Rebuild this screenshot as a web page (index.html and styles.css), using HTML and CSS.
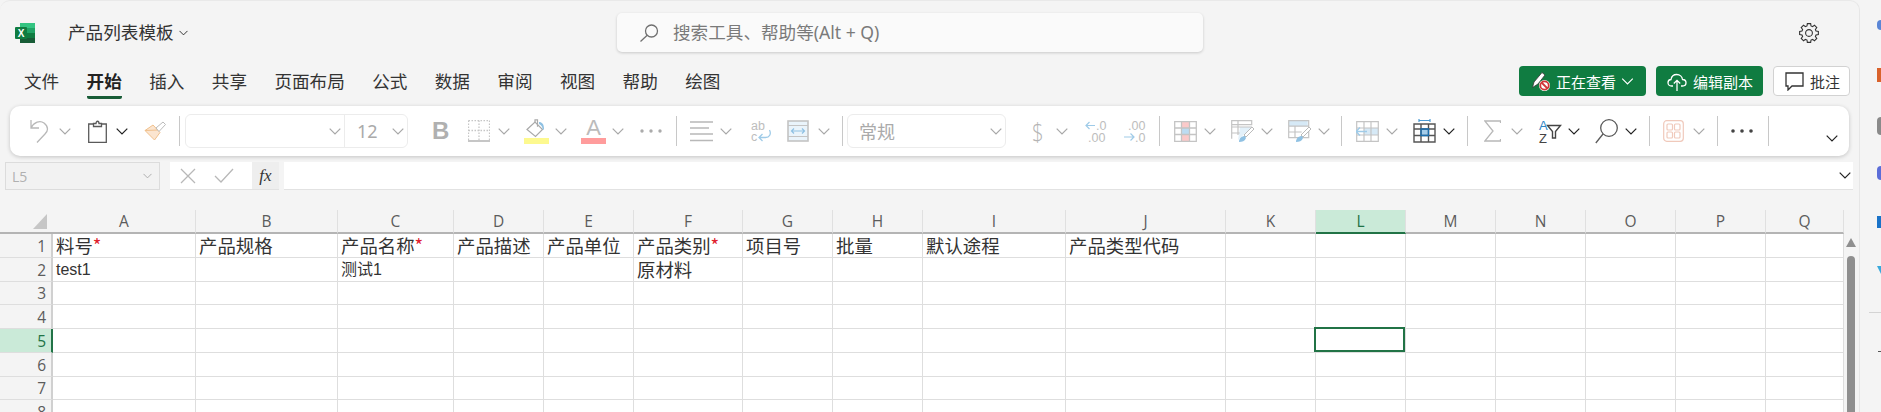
FILE: index.html
```html
<!DOCTYPE html>
<html lang="zh-CN">
<head>
  <meta charset="UTF-8">
  <title>产品列表模板 - Excel</title>
  <link rel="stylesheet" href="styles.css">
</head>
<body>
  <svg class="defs">
    <symbol id="chev" viewBox="0 0 12 7"><path d="M.7.7 6 6 11.3.7"/></symbol>
  </svg>

  <div class="app">
    <header class="titlebar">
      <div class="doc">
        <svg class="logo" width="20" height="20" viewBox="0 0 20 20">
          <rect x="5" width="15" height="20" rx="1.5" fill="#21a366"/>
          <rect x="5" width="15" height="5" fill="#33c481"/>
          <rect x="5" y="10" width="15" height="5" fill="#107c41"/>
          <rect x="5" y="15" width="15" height="5" fill="#185c37"/>
          <rect y="4" width="12" height="12" rx="1" fill="#107c41"/>
          <text x="6" y="13.6" class="logo-x">X</text>
        </svg>
        <span class="doc-name">产品列表模板</span>
        <svg class="chev dark small"><use href="#chev"/></svg>
      </div>
      <div class="search">
        <svg width="20" height="18" viewBox="0 0 20 18" class="line">
          <circle cx="12.5" cy="7" r="6"/><path d="M8.2 11.3 1.5 17.5"/>
        </svg>
        <span>搜索工具、帮助等(Alt + Q)</span>
      </div>
      <svg class="gear line dark" width="20" height="20" viewBox="-10 -10 20 20">
        <polygon points="7.02,-2.01 9.36,-1.65 9.36,1.65 7.02,2.01 6.38,3.54 7.78,5.45 5.45,7.78 3.54,6.38 2.01,7.02 1.65,9.36 -1.65,9.36 -2.01,7.02 -3.54,6.38 -5.45,7.78 -7.78,5.45 -6.38,3.54 -7.02,2.01 -9.36,1.65 -9.36,-1.65 -7.02,-2.01 -6.38,-3.54 -7.78,-5.45 -5.45,-7.78 -3.54,-6.38 -2.01,-7.02 -1.65,-9.36 1.65,-9.36 2.01,-7.02 3.54,-6.38 5.45,-7.78 7.78,-5.45 6.38,-3.54"/>
        <circle r="3.4"/>
      </svg>
    </header>

    <div class="menu">
      <nav class="tabs">
        <a>文件</a>
        <a class="active">开始</a>
        <a>插入</a>
        <a>共享</a>
        <a>页面布局</a>
        <a>公式</a>
        <a>数据</a>
        <a>审阅</a>
        <a>视图</a>
        <a>帮助</a>
        <a>绘图</a>
      </nav>
      <div class="actions">
        <button class="btn green viewing">
          <svg width="20" height="22" viewBox="0 0 20 22">
            <path d="M1.5 17.5 3 12 11 2.5l3 2.500-7 9z" fill="#fff" stroke="#333" stroke-width=".8"/>
            <circle cx="13.5" cy="15.5" r="5.5" fill="#fff"/>
            <circle cx="13.5" cy="15.5" r="4.2" fill="none" stroke="#d13438" stroke-width="1.8"/>
            <path d="m10.5 12.5 6 6" stroke="#d13438" stroke-width="1.8"/>
          </svg>
          <span>正在查看</span>
          <svg class="chev white"><use href="#chev"/></svg>
        </button>
        <button class="btn green saving">
          <svg class="line white-line" width="20" height="20" viewBox="0 0 20 20">
            <path d="M6 15H4.500C2.500 15 1 13.500 1 11.700S2.400 8.500 4 8.500C4.500 5.500 7 3.500 9.800 3.500c3 0 5.400 2.200 5.700 5 2 .1 3.500 1.500 3.500 3.300S17.500 15 15.500 15H14M10 20V9.500M6.800 12.500 10 9.300l3.200 3.200"/>
          </svg>
          <span>编辑副本</span>
        </button>
        <button class="btn plain comment">
          <svg class="line dark" width="19" height="19" viewBox="0 0 19 19">
            <path d="M1 1h17v13H7l-4 4v-4H1z"/>
          </svg>
          <span>批注</span>
        </button>
      </div>
    </div>

    <div class="ribbon">
      <svg class="line" width="21" height="24" viewBox="0 0 21 24"><path d="M2 1v8h8M2 9c3-6 9-8 13-5 5 4 4 8 1 11l-8 8.500"/></svg>
      <svg class="chev"><use href="#chev"/></svg>

      <svg width="19" height="23" viewBox="0 0 19 23" class="line gray">
        <path d="M5.5 4H.7v18.300h17.600V4h-4.800"/><path d="M5.500 6.500V3.500H8c0-3 3-3 3 0h2.500v3z"/>
      </svg>
      <svg class="chev dark"><use href="#chev"/></svg>

      <svg width="22" height="20" viewBox="0 0 22 20">
        <path d="M1 9.500 9 4l7 7.500-5.500 7.500z" fill="#fbe5d0" stroke="#f0c08c"/>
        <path d="M1 9.500 14 9" stroke="#f0c08c"/>
        <path d="m12 7 7-6 2.500 2.500-6.500 7z" fill="#fff" stroke="#bbb"/>
      </svg>

      <i class="sep"></i>

      <div class="font-box">
        <div class="font-name"><svg class="chev"><use href="#chev"/></svg></div>
        <div class="font-size"><span>12</span><svg class="chev"><use href="#chev"/></svg></div>
      </div>

      <b class="bold">B</b>

      <svg width="22" height="22" viewBox="0 0 22 22" class="line light">
        <path d="M.5.500h21M.5 10.500h21M.5.500v20M11 .5v20M21.500.500v20" stroke-dasharray="1.500 1.500"/>
        <path d="M0 21h22" stroke-width="1.800"/>
      </svg>
      <svg class="chev"><use href="#chev"/></svg>

      <svg width="25" height="25" viewBox="0 0 25 25">
        <path d="M3 10.500 11 3l7.500 7.500-7 7z" fill="#fff" stroke="#aaa" stroke-width="1.200"/>
        <path d="M11 3V.8h2.500v7" fill="none" stroke="#aaa" stroke-width="1.200"/>
        <path d="M15 3c3 0 5 2 5 7 0 1-1.500 1-1.500 0 0-2-1-4-3.500-5z" fill="#8fc1e3"/>
        <rect y="19" width="25" height="6" fill="#fdf98f"/>
      </svg>
      <svg class="chev"><use href="#chev"/></svg>

      <div class="font-color">A</div>
      <svg class="chev"><use href="#chev"/></svg>

      <svg width="22" height="4" viewBox="0 0 22 4" class="dots"><circle cx="2" cy="2" r="1.700"/><circle cx="11" cy="2" r="1.700"/><circle cx="20" cy="2" r="1.700"/></svg>

      <i class="sep"></i>

      <svg width="23" height="21" viewBox="0 0 23 21" class="line"><path d="M0 1h23M0 7h19M0 13h23M0 19.500h23" stroke-width="1.400"/></svg>
      <svg class="chev"><use href="#chev"/></svg>

      <svg width="21" height="23" viewBox="0 0 21 23" class="mini">
        <text x="0" y="10">ab</text><text x="0" y="21">c</text>
        <path d="M18.500 10c2 4 0 7.500-4 7.500H8m3.500-3.500L8 17.500l3.500 3.500" fill="none" stroke="#9fcbe8" stroke-width="1.300"/>
      </svg>

      <svg width="22" height="22" viewBox="0 0 22 22">
        <rect x="1" y="1" width="20" height="20" fill="#eaf4fb" stroke="#c4c4c4" stroke-width="1.600"/>
        <path d="M1 5.500h20M1 16.500h20" stroke="#c4c4c4" stroke-width="1.200"/>
        <path d="M4.500 11h13M7 8.500 4.500 11 7 13.500M15 8.500l2.500 2.500-2.500 2.500" fill="none" stroke="#8fc1e3" stroke-width="1.200"/>
      </svg>
      <svg class="chev"><use href="#chev"/></svg>

      <i class="sep"></i>

      <div class="num-box"><span>常规</span><svg class="chev"><use href="#chev"/></svg></div>

      <span class="dollar">$</span>
      <svg class="chev"><use href="#chev"/></svg>

      <svg width="22" height="24" viewBox="0 0 22 24" class="mini">
        <path d="M10 6.500H1m3.500-3.500L1 6.500 4.500 10" fill="none" stroke="#9fcbe8" stroke-width="1.200"/>
        <text x="11" y="11">.0</text><text x="3" y="23">.00</text>
      </svg>
      <svg width="23" height="24" viewBox="0 0 23 24" class="mini">
        <text x="5" y="11">.00</text><text x="12" y="23">.0</text>
        <path d="M1 18h10m-3.500-3.500L11 18l-3.500 3.500" fill="none" stroke="#9fcbe8" stroke-width="1.200"/>
      </svg>

      <i class="sep"></i>

      <svg width="23" height="21" viewBox="0 0 23 21">
        <rect x="7.5" y=".5" width="8" height="6.500" fill="#fbcaca"/>
        <rect x="7.5" y="7" width="8" height="6.500" fill="#bcdcf2"/>
        <rect x="7.5" y="13.500" width="8" height="7" fill="#fbcaca"/>
        <path d="M.7.700h21.600v19.600H.7zM.7 7h21.600M.7 13.500h21.600M7.500.7v19.600M15.500.7v19.600" fill="none" stroke="#c4c4c4" stroke-width="1.300"/>
      </svg>
      <svg class="chev"><use href="#chev"/></svg>

      <svg width="24" height="23" viewBox="0 0 24 23">
        <path d="M9 7h12L7 20z" fill="#e3f1fa"/>
        <path d="M.7.700h20v4h-20zM.7.700v18M.7 7H21M.7 13h8M7 1v14" fill="none" stroke="#c4c4c4" stroke-width="1.200"/>
        <path d="M13 15 21 7l2 2-8 8z" fill="#fff" stroke="#bbb"/>
        <path d="M8 22c0-4 3-6 6-6l1 2c-1 3-4 4-7 4z" fill="#8fc1e3"/>
      </svg>
      <svg class="chev"><use href="#chev"/></svg>

      <svg width="24" height="23" viewBox="0 0 24 23">
        <rect x=".7" y=".7" width="19" height="5.500" fill="#d6e9f6"/>
        <path d="M.7.700h20v17H.7zM.7 6.200h20M.7 12h13M7 6v12" fill="none" stroke="#c4c4c4" stroke-width="1.200"/>
        <path d="M13 15 21 7l2 2-8 8z" fill="#fff" stroke="#bbb"/>
        <path d="M8 22c0-4 3-6 6-6l1 2c-1 3-4 4-7 4z" fill="#8fc1e3"/>
      </svg>
      <svg class="chev"><use href="#chev"/></svg>

      <i class="sep"></i>

      <svg width="23" height="21" viewBox="0 0 23 21">
        <rect x="8" y="7" width="14.5" height="7" fill="#d6e9f6"/>
        <path d="M.7.700h21.600v19.600H.7zM8 .7v19.600M15 .7v19.600M.7 7h21.600M.7 14h21.600" fill="none" stroke="#c4c4c4" stroke-width="1.200"/>
        <path d="M11 10.500H0m4-4-4 4 4 4" fill="none" stroke="#9fcbe8" stroke-width="1.400"/>
      </svg>
      <svg class="chev"><use href="#chev"/></svg>

      <svg width="23" height="24" viewBox="0 0 23 24">
        <rect x="8" y="10" width="7.5" height="6.500" fill="#4a9bd6" opacity=".5"/>
        <path d="M1 5h21v18H1zM1 10h21M1 16.500h21M8 5v18M15.500 5v18" fill="none" stroke="#555" stroke-width="1.400"/>
        <path d="M8 10h7.500v6.500H8z" fill="none" stroke="#1a6fb0" stroke-width="1.400"/>
        <path d="M6 1.500h11M6 0v3M17 0v3" fill="none" stroke="#4a9bd6" stroke-width="1.200"/>
      </svg>
      <svg class="chev dark"><use href="#chev"/></svg>

      <i class="sep"></i>

      <svg width="17" height="22" viewBox="0 0 17 22" class="line"><path d="M16.500 3V1H.8L9 11 .8 21h15.700v-2"/></svg>
      <svg class="chev"><use href="#chev"/></svg>

      <svg width="22" height="24" viewBox="0 0 22 24" class="sort">
        <text x="0" y="10.5" class="sort-a">A</text>
        <text x="0" y="23.5">Z</text>
        <path d="M8.500 6.500h13l-5 6v6.500h-3v-6.500z" fill="none" stroke="#444" stroke-width="1.400"/>
      </svg>
      <svg class="chev dark"><use href="#chev"/></svg>

      <svg width="23" height="25" viewBox="0 0 23 25" class="line gray"><circle cx="14" cy="9" r="8.300"/><path d="M8 15 .8 24"/></svg>
      <svg class="chev dark"><use href="#chev"/></svg>

      <i class="sep"></i>

      <svg width="21" height="22" viewBox="0 0 21 22" fill="none" stroke="#f0c9bb" stroke-width="1.200">
        <rect x=".7" y=".7" width="19.6" height="20.6" rx="3"/>
        <rect x="4" y="4" width="5.5" height="6" rx="1"/><rect x="11.5" y="4" width="5.5" height="6" rx="1"/>
        <rect x="4" y="12" width="5.5" height="6" rx="1"/><rect x="11.5" y="12" width="5.5" height="6" rx="1"/>
      </svg>
      <svg class="chev"><use href="#chev"/></svg>

      <i class="sep"></i>

      <svg width="22" height="4" viewBox="0 0 22 4" class="dots on"><circle cx="2" cy="2" r="1.800"/><circle cx="11" cy="2" r="1.800"/><circle cx="20" cy="2" r="1.800"/></svg>

      <i class="sep"></i>

      <svg class="chev dark collapse"><use href="#chev"/></svg>
    </div>

    <div class="formula">
      <div class="name-box"><span>L5</span><svg class="chev small"><use href="#chev"/></svg></div>
      <div class="fx-btns">
        <svg class="line" width="16" height="16" viewBox="0 0 16 16"><path d="m1 1 14 14M15 1 1 15"/></svg>
        <svg class="line" width="20" height="15" viewBox="0 0 20 15"><path d="m1 8 6 6L19 1"/></svg>
        <span class="fx">fx</span>
      </div>
      <div class="fx-input"><svg class="chev dark"><use href="#chev"/></svg></div>
    </div>

    <div class="sheet">
      <table class="grid">
        <colgroup>
          <col class="c-head"><col class="c143"><col class="c142"><col class="c116"><col class="c90"><col class="c90">
          <col class="c109"><col class="c90"><col class="c90"><col class="c143"><col class="c160"><col class="c90">
          <col class="c90"><col class="c90"><col class="c90"><col class="c90"><col class="c90"><col class="c78">
        </colgroup>
        <tr class="cols">
          <th class="corner"><i></i></th>
          <th>A</th><th>B</th><th>C</th><th>D</th><th>E</th><th>F</th><th>G</th><th>H</th><th>I</th><th>J</th><th>K</th>
          <th class="picked">L</th><th>M</th><th>N</th><th>O</th><th>P</th><th>Q</th>
        </tr>
        <tr>
          <th>1</th>
          <td>料号<em>*</em></td><td>产品规格</td><td>产品名称<em>*</em></td><td>产品描述</td><td>产品单位</td><td>产品类别<em>*</em></td>
          <td>项目号</td><td>批量</td><td>默认途程</td><td>产品类型代码</td><td></td><td></td><td></td><td></td><td></td><td></td><td></td>
        </tr>
        <tr>
          <th>2</th>
          <td class="narrow">test1</td><td></td><td class="narrow">测试1</td><td></td><td></td><td>原材料</td>
          <td></td><td></td><td></td><td></td><td></td><td></td><td></td><td></td><td></td><td></td><td></td>
        </tr>
        <tr class="short">
          <th>3</th>
          <td></td><td></td><td></td><td></td><td></td><td></td><td></td><td></td><td></td><td></td><td></td><td></td><td></td><td></td><td></td><td></td><td></td>
        </tr>
        <tr>
          <th>4</th>
          <td></td><td></td><td></td><td></td><td></td><td></td><td></td><td></td><td></td><td></td><td></td><td></td><td></td><td></td><td></td><td></td><td></td>
        </tr>
        <tr>
          <th class="picked-row">5</th>
          <td></td><td></td><td></td><td></td><td></td><td></td><td></td><td></td><td></td><td></td><td></td>
          <td class="selected"></td><td></td><td></td><td></td><td></td><td></td>
        </tr>
        <tr>
          <th>6</th>
          <td></td><td></td><td></td><td></td><td></td><td></td><td></td><td></td><td></td><td></td><td></td><td></td><td></td><td></td><td></td><td></td><td></td>
        </tr>
        <tr class="short">
          <th>7</th>
          <td></td><td></td><td></td><td></td><td></td><td></td><td></td><td></td><td></td><td></td><td></td><td></td><td></td><td></td><td></td><td></td><td></td>
        </tr>
        <tr>
          <th>8</th>
          <td></td><td></td><td></td><td></td><td></td><td></td><td></td><td></td><td></td><td></td><td></td><td></td><td></td><td></td><td></td><td></td><td></td>
        </tr>
      </table>
      <div class="scrollbar">
        <i class="arrow"></i>
        <i class="thumb"></i>
      </div>
    </div>
  </div>

  <aside class="rail">
    <i class="r1"></i><i class="r2"></i><i class="r3"></i><i class="r4"></i><i class="r5"></i><i class="r6"></i>
    <i class="r7"></i><i class="r8"></i>
  </aside>
</body>
</html>
```

FILE: styles.css
```css
:root {
  --bg: #f4f4f4;
  --green: #107c41;
  --cell-green: #217346;
  --picked: #caead8;
  --line: #dedede;
  --cjk: "Noto Sans CJK SC", "Noto Sans", sans-serif;
}
* {
  margin: 0;
  padding: 0;
  box-sizing: border-box;
}
html, body {
  height: 412px;
  overflow: hidden;
}
body {
  display: flex;
  background: var(--bg);
  font-family: "Noto Sans", var(--cjk);
  color: #333;
}
.defs {
  display: none;
}
i {
  display: block;
}

/* shared icon styles */
.chev {
  width: 12px;
  height: 7px;
  fill: none;
  stroke: #a8a8a8;
  stroke-width: 1.2;
  flex: none;
}
.chev.dark {
  stroke: #222;
}
.chev.white {
  width: 13px;
  stroke: #fff;
}
.chev.small {
  width: 9px;
  height: 6px;
}
.line {
  fill: none;
  stroke: #b8b8b8;
  stroke-width: 1.3;
  flex: none;
}
.line.gray {
  stroke: #5a5a5a;
}
.line.dark {
  stroke: #333;
}
.line.light {
  stroke: #c6c6c6;
}
.white-line {
  stroke: #fff;
}

.app {
  width: 1860px;
  height: 412px;
  flex: none;
  display: flex;
  flex-direction: column;
  border-top: 1px solid #e9e9e9;
  border-right: 1px solid #e6e6e6;
  border-radius: 10px 10px 0 0;
  overflow: hidden;
}

/* title row */
.titlebar {
  height: 63px;
  flex: none;
  display: grid;
  grid-template-columns: 617px 586px 1fr;
  align-items: center;
}
.doc {
  display: flex;
  align-items: center;
  padding-left: 15px;
}
.logo-x {
  font: 700 10px "Liberation Sans", sans-serif;
  fill: #fff;
  text-anchor: middle;
}
.doc-name {
  margin-left: 33px;
  margin-right: 5px;
  padding-bottom: 2px;
  font-size: 17.6px;
  color: #333;
}
.search {
  height: 39px;
  display: flex;
  align-items: center;
  gap: 14px;
  padding-left: 22px;
  background: #fafafa;
  border-radius: 5px;
  box-shadow: 0 1px 3px rgba(0, 0, 0, 0.18);
  font-size: 17.6px;
  color: #7a7a7a;
}
.search span {
  padding-bottom: 2px;
}
.search .line {
  stroke: #707070;
}
.gear {
  justify-self: end;
  margin-right: 40px;
  stroke-width: 1.1;
}

/* tabs and the buttons beside them */
.menu {
  height: 42px;
  flex: none;
  display: flex;
  justify-content: space-between;
  align-items: flex-start;
  padding: 2px 9px 0 24px;
}
.tabs {
  display: flex;
  gap: 27.4px;
  margin-top: 3px;
}
.tabs a {
  font-size: 17.6px;
  line-height: 24px;
  padding-bottom: 3px;
  border-bottom: 3px solid transparent;
  color: #333;
}
.tabs a.active {
  font-weight: 700;
  color: #222;
  border-bottom-color: #185c37;
  border-radius: 0 0 2px 2px;
}
.actions {
  display: flex;
  gap: 10px;
}
.btn {
  height: 30px;
  display: flex;
  align-items: center;
  border-radius: 4px;
  border: none;
  font-family: var(--cjk);
  font-size: 15px;
}
.btn.green {
  background: var(--green);
  color: #fff;
}
.btn.plain {
  background: #fff;
  border: 1px solid #d2d2d2;
  color: #333;
}
.viewing {
  width: 127px;
  gap: 5px;
  padding-left: 12px;
}
.saving {
  width: 107px;
  gap: 6px;
  padding-left: 11px;
}
.comment {
  width: 77px;
  gap: 6px;
  padding-left: 11px;
}

/* ribbon: one track per item, the tracks are the spacing */
.ribbon {
  height: 50px;
  flex: none;
  margin: 0 10px;
  padding-left: 19px;
  display: grid;
  grid-template-columns:
    30px 29px 28px 28px 35px 6px 247px
    36px 30px 26px 31px 26px 31px 28px 36px
    14px 30px 31px 36px 31px 24px 5px 185px
    24px 29px 38px 36px 15px 30px 27px 30px
    27px 30px 23px 15px 30px 27px 30px 24px
    17px 27px 28px 29px 27px 30px 24px 14px
    30px 24px 14px 37px 58px 12px;
  align-items: center;
  justify-items: start;
  background: #fff;
  border-radius: 10px;
  box-shadow: 0 1px 4px rgba(0, 0, 0, 0.2);
}
.sep {
  width: 1px;
  height: 30px;
  background: #c8c8c8;
}
.font-box {
  width: 223px;
  height: 34px;
  display: flex;
  border: 1px solid #ececec;
  border-radius: 6px;
}
.font-name {
  width: 159px;
  display: flex;
  align-items: center;
  justify-content: flex-end;
  padding-right: 3px;
  border-right: 1px solid #ececec;
}
.font-size {
  flex: 1;
  display: flex;
  align-items: center;
  justify-content: space-between;
  padding: 0 3px 0 12px;
  font-size: 18px;
  color: #aaa;
}
.bold {
  font: 700 24px "Liberation Sans", sans-serif;
  color: #b0b0b0;
}
.font-color {
  width: 25px;
  height: 26px;
  border-bottom: 6px solid #ff9c9c;
  text-align: center;
  font: 22px/20px "Liberation Sans", sans-serif;
  color: #bbb;
}
.dots {
  fill: #ababab;
}
.dots.on {
  fill: #444;
}
.mini {
  overflow: visible;
}
.mini text {
  font: 12.5px "Liberation Sans", sans-serif;
  fill: #bdbdbd;
}
.num-box {
  width: 159px;
  height: 34px;
  display: flex;
  align-items: center;
  justify-content: space-between;
  padding: 0 3px 0 11px;
  border: 1px solid #ececec;
  border-radius: 6px;
  font-family: var(--cjk);
  font-size: 18px;
  color: #aaa;
}
.dollar {
  display: inline-block;
  transform: scaleX(0.78);
  transform-origin: left center;
  font: 300 26px "Open Sans", sans-serif;
  color: #b4b4b4;
}
.sort {
  overflow: visible;
}
.sort text {
  font: 13px "Liberation Sans", sans-serif;
  fill: #444;
}
.sort .sort-a {
  fill: #2f86c5;
}
.collapse {
  margin-top: 15px;
}

/* formula bar */
.formula {
  height: 28px;
  flex: none;
  display: flex;
  margin: 6px 6px 0 5px;
}
.name-box {
  width: 155px;
  display: flex;
  align-items: center;
  justify-content: space-between;
  padding: 0 7px 0 6px;
  background: #f2f2f2;
  border: 1px solid #dcdcdc;
  font-family: "Open Sans", sans-serif;
  font-size: 14px;
  color: #b0b0b0;
}
.fx-btns {
  width: 109px;
  margin-left: 10px;
  display: flex;
  align-items: center;
  padding-left: 10px;
  gap: 18px;
  background: #fff;
  border-bottom: 1px solid #e2e2e2;
}
.fx {
  margin-left: auto;
  width: 37px;
  height: 100%;
  display: flex;
  align-items: center;
  justify-content: center;
  background: #eee;
  font: italic 17px "Liberation Serif", serif;
  color: #333;
}
.fx-input {
  flex: 1;
  margin-left: 5px;
  display: flex;
  align-items: center;
  justify-content: flex-end;
  padding-right: 2px;
  background: #fff;
  border-bottom: 1px solid #e2e2e2;
}

/* the sheet */
.sheet {
  flex: 1;
  display: flex;
  margin-top: 20px;
  min-height: 0;
}
.grid {
  width: 1844px;
  flex: none;
  table-layout: fixed;
  border-collapse: separate;
  border-spacing: 0;
  background: #fff;
  align-self: flex-start;
}
.c-head { width: 53px; }
.c78 { width: 78px; }
.c90 { width: 90px; }
.c109 { width: 109px; }
.c116 { width: 116px; }
.c142 { width: 142px; }
.c143 { width: 143px; }
.c160 { width: 160px; }
.grid tr {
  height: 24px;
}
.grid tr.short {
  height: 23px;
}
.grid td {
  padding: 0 0 2px 3px;
  border-right: 1px solid var(--line);
  border-bottom: 1px solid var(--line);
  font-family: var(--cjk);
  font-size: 18.4px;
  line-height: 20px;
  color: #333;
  white-space: nowrap;
}
.grid td.narrow {
  padding-bottom: 0;
  font-family: "Liberation Sans", var(--cjk);
  font-size: 16px;
}
.grid em {
  font-style: normal;
  color: #e0202c;
}
.grid th {
  background: #f4f4f4;
  border-bottom: 1px solid var(--line);
  border-right: 2px solid #d0d0d0;
  font-family: "Open Sans", sans-serif;
  font-weight: 400;
  font-size: 15.5px;
  line-height: 20px;
  text-align: right;
  padding-right: 5px;
  color: #5c5c5c;
}
.cols th {
  border-right: 1px solid #e0e0e0;
  border-bottom: 2px solid #b4b4b4;
  text-align: center;
  padding: 0;
}
.cols th.corner {
  border-right: none;
}
.corner i {
  width: 0;
  height: 0;
  margin: 0 6px 0 auto;
  border-left: 14px solid transparent;
  border-bottom: 15px solid #c6c6c6;
}
.cols th.picked {
  background: var(--picked);
  border-bottom-color: var(--cell-green);
  color: var(--cell-green);
}
.grid th.picked-row {
  background: var(--picked);
  border-right-color: var(--cell-green);
  color: var(--cell-green);
}
.grid td.selected {
  position: relative;
}
.grid td.selected::after {
  content: "";
  position: absolute;
  top: -2px;
  left: -2px;
  right: 0;
  bottom: 0;
  border: 2px solid var(--cell-green);
}

.scrollbar {
  flex: 1;
  display: flex;
  flex-direction: column;
  align-items: center;
  padding: 28px 1px 0 0;
}
.arrow {
  width: 0;
  height: 0;
  border-left: 5px solid transparent;
  border-right: 5px solid transparent;
  border-bottom: 9px solid #8f8f8f;
}
.thumb {
  width: 8px;
  flex: 1;
  margin-top: 9px;
  background: #8f8f8f;
  border-radius: 4px 4px 0 0;
}

/* clipped icon strip at the window edge */
.rail {
  flex: 1;
  display: flex;
  flex-direction: column;
  align-items: flex-end;
}
.rail i {
  width: 4px;
}
.rail .r1 { height: 10px; margin-top: 20px; background: #5a86d6; border-radius: 5px 0 0 5px; }
.rail .r2 { height: 14px; margin-top: 38px; background: #d9622b; }
.rail .r3 { height: 18px; margin-top: 35px; background: #8a8a8a; border-radius: 4px 0 0 4px; }
.rail .r4 { height: 14px; margin-top: 31px; background: #5b6dd8; border-radius: 4px 0 0 4px; }
.rail .r5 { height: 12px; margin-top: 36px; background: #1a73c8; }
.rail .r6 { height: 8px; margin-top: 38px; background: #39a9dc; clip-path: polygon(0 0, 100% 0, 100% 100%); }
.rail .r7 { width: 12px; height: 1px; margin-top: 38px; background: #d4d4d4; }
.rail .r8 { width: 3px; height: 1px; margin-top: 38px; background: #555; }
```
